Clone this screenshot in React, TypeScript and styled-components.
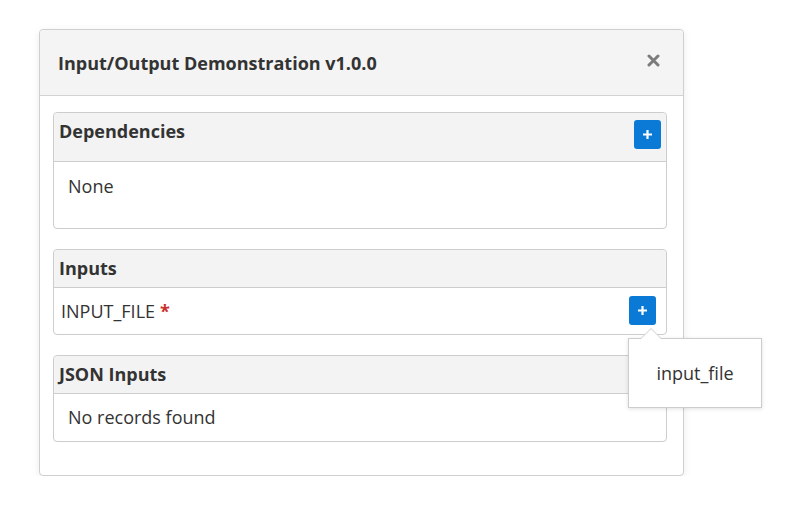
import React from "react";
import styled, { createGlobalStyle } from "styled-components";

const Global = createGlobalStyle`
  html, body { margin: 0; padding: 0; background: #fff; }
  body { font-family: "Open Sans", "Noto Sans", sans-serif; color: #333; }
  * { box-sizing: border-box; }
`;

const Page = styled.div`
  padding: 29px 0 0 39px;
`;

const Modal = styled.div`
  width: 645px;
  border: 1px solid #cfcfcf;
  border-radius: 4px;
  background: #fff;
  box-shadow: 0 2px 8px rgba(0, 0, 0, 0.08);
`;

const ModalHeader = styled.div`
  display: flex;
  align-items: center;
  justify-content: space-between;
  height: 66px;
  padding: 0 23px 0 18px;
  background: #f4f4f4;
  border-bottom: 1px solid #d2d2d2;
  border-radius: 4px 4px 0 0;
`;

const Title = styled.h4`
  margin: 0;
  font-size: 18px;
  font-weight: 700;
  line-height: 24px;
  color: #333;
`;

const CloseButton = styled.button`
  border: 0;
  background: none;
  padding: 0;
  width: 14px;
  height: 14px;
  margin-top: -5px;
  display: flex;
  align-items: center;
  justify-content: center;
  cursor: pointer;
`;

const ModalBody = styled.div`
  display: flex;
  flex-direction: column;
  gap: 20px;
  padding: 16px 16px 33px 13px;
`;

const Panel = styled.section`
  border: 1px solid #cdcdcd;
  border-radius: 4px;
  background: #fff;
`;

const PanelHeader = styled.div<{ $withAction?: boolean }>`
  display: flex;
  align-items: flex-start;
  justify-content: space-between;
  padding: 6px 5px ${(p) => (p.$withAction ? "12px" : "7px")} 5px;
  background: #f3f3f3;
  border-bottom: 1px solid #cdcdcd;
  border-radius: 4px 4px 0 0;
`;

const PanelTitle = styled.h5`
  margin: 0;
  font-size: 18px;
  font-weight: 700;
  line-height: 24px;
  color: #333;
`;

const PanelBody = styled.div<{ $tall?: boolean }>`
  padding: ${(p) => (p.$tall ? "12px 14px 30px 14px" : "11px 14px 12px 14px")};
  font-size: 18px;
  line-height: 24px;
  color: #333;
`;

const FieldRow = styled.div`
  display: flex;
  align-items: center;
  justify-content: space-between;
  padding: 8px 10px 9px 7px;
  font-size: 18px;
  line-height: 24px;
  color: #333;
`;

const Required = styled.span`
  color: #c9302c;
  font-weight: 700;
  margin-left: 5px;
`;

const AddButton = styled.button`
  width: 27px;
  height: 29px;
  border: 0;
  border-radius: 3px;
  background: #0a7ad6;
  display: flex;
  align-items: center;
  justify-content: center;
  padding: 0;
  cursor: pointer;
`;

const ButtonAnchor = styled.div`
  position: relative;
`;

const Tooltip = styled.div`
  position: absolute;
  left: -1px;
  top: 42px;
  width: 134px;
  height: 70px;
  background: #fff;
  border: 1px solid #cdcdcd;
  box-shadow: 0 1px 4px rgba(0, 0, 0, 0.12);
  display: flex;
  align-items: center;
  justify-content: center;
  font-size: 18px;
  color: #333;
  z-index: 5;

  &::before,
  &::after {
    content: "";
    position: absolute;
    left: 11px;
    border-style: solid;
    border-color: transparent;
  }
  &::before {
    top: -11px;
    border-width: 0 11px 11px 11px;
    border-bottom-color: #cdcdcd;
  }
  &::after {
    top: -10px;
    left: 12px;
    border-width: 0 10px 10px 10px;
    border-bottom-color: #fff;
  }
`;

const Plus = () => (
  <svg width="11" height="11" viewBox="0 0 11 11">
    <path d="M5.5 1v9M1 5.5h9" stroke="#fff" strokeWidth="2.2" strokeLinecap="butt" />
  </svg>
);

const Times = () => (
  <svg width="13" height="13" viewBox="0 0 13 13">
    <path d="M2 2l9 9M11 2l-9 9" stroke="#7b7b7b" strokeWidth="3" strokeLinecap="round" />
  </svg>
);

export default function App() {
  return (
    <>
      <Global />
      <Page>
        <Modal>
          <ModalHeader>
            <Title>Input/Output Demonstration v1.0.0</Title>
            <CloseButton aria-label="Close">
              <Times />
            </CloseButton>
          </ModalHeader>
          <ModalBody>
            <Panel>
              <PanelHeader $withAction>
                <PanelTitle>Dependencies</PanelTitle>
                <AddButton aria-label="Add dependency" style={{ marginTop: 1 }}>
                  <Plus />
                </AddButton>
              </PanelHeader>
              <PanelBody $tall>None</PanelBody>
            </Panel>
            <Panel>
              <PanelHeader>
                <PanelTitle>Inputs</PanelTitle>
              </PanelHeader>
              <FieldRow>
                <span>
                  INPUT_FILE<Required>*</Required>
                </span>
                <ButtonAnchor>
                  <AddButton aria-label="Add input">
                    <Plus />
                  </AddButton>
                  <Tooltip>input_file</Tooltip>
                </ButtonAnchor>
              </FieldRow>
            </Panel>
            <Panel>
              <PanelHeader>
                <PanelTitle>JSON Inputs</PanelTitle>
              </PanelHeader>
              <PanelBody>No records found</PanelBody>
            </Panel>
          </ModalBody>
        </Modal>
      </Page>
    </>
  );
}
